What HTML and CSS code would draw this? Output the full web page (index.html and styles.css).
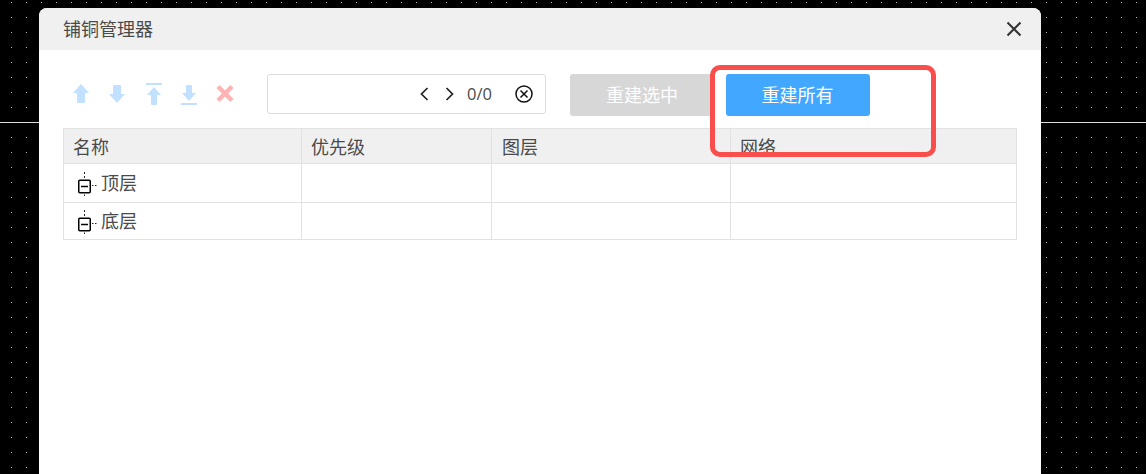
FILE: index.html
```html
<!DOCTYPE html>
<html lang="zh">
<head>
<meta charset="utf-8">
<title>铺铜管理器</title>
<link rel="stylesheet" href="styles.css">
</head>
<body>
<div class="dialog">
  <header class="dialog-head">
    <span class="dialog-title">铺铜管理器</span>
    <svg class="close" width="16" height="16" viewBox="0 0 16 16"><path d="M1.500 1.500l13 13M14.500 1.500l-13 13" stroke="#333" stroke-width="2" fill="none"/></svg>
  </header>
  <div class="dialog-body">
    <div class="toolbar">
      <div class="tools">
        <svg class="tool" width="20" height="22" viewBox="0 0 20 22"><path d="M10 1L18 10H14V19a1 1 0 0 1-1 1H7a1 1 0 0 1-1-1V10H2Z" fill="#c2e0ff"/></svg>
        <svg class="tool" width="20" height="22" viewBox="0 0 20 22"><path d="M7 2h6a1 1 0 0 1 1 1v8h4l-8 9-8-9h4V3a1 1 0 0 1 1-1Z" fill="#c2e0ff"/></svg>
        <svg class="tool" width="20" height="22" viewBox="0 0 20 22"><path d="M3 0h16v2H3ZM11 4l7 8h-4v9a1 1 0 0 1-1 1H9a1 1 0 0 1-1-1v-9H4Z" fill="#c2e0ff"/></svg>
        <svg class="tool" width="20" height="22" viewBox="0 0 20 22"><path d="M8 2h4a1 1 0 0 1 1 1v7h4l-7 8-7-8h4V3a1 1 0 0 1 1-1ZM2 20h16v2H2Z" fill="#c2e0ff"/></svg>
        <svg class="tool" width="20" height="22" viewBox="0 0 20 22"><path d="M3 3.500l14 14M17 3.500l-14 14" stroke="#ffb3b3" stroke-width="4.500" fill="none"/></svg>
      </div>
      <div class="search">
        <svg width="9" height="14" viewBox="0 0 9 14"><path d="M7.500 1L1.500 7l6 6" stroke="#222" stroke-width="1.700" fill="none"/></svg>
        <svg class="next" width="9" height="14" viewBox="0 0 9 14"><path d="M1.500 1l6 6-6 6" stroke="#222" stroke-width="1.700" fill="none"/></svg>
        <span class="count">0/0</span>
        <svg class="clear" width="18" height="18" viewBox="0 0 18 18"><circle cx="9" cy="9" r="8" stroke="#111" stroke-width="1.500" fill="none"/><path d="M5.500 5.500l7 7M12.500 5.500l-7 7" stroke="#111" stroke-width="1.500" fill="none"/></svg>
      </div>
      <button class="btn btn-off" type="button">重建选中</button>
      <button class="btn btn-on" type="button">重建所有</button>
    </div>
    <div class="table">
      <div class="row row-head">
        <div class="cell">名称</div><div class="cell">优先级</div><div class="cell">图层</div><div class="cell">网络</div>
      </div>
      <div class="row">
        <div class="cell cell-tree"><svg width="21" height="26" viewBox="0 0 21 26"><path d="M8.500 2v2M8.500 6v2M8.500 24.500v1.500M16 15.500h1.500M19 15.500h1.500" stroke="#222" fill="none"/><rect x="2.750" y="10.250" width="11.500" height="12.500" rx="1" stroke="#000" stroke-width="1.500" fill="#fff"/><path d="M5 16.500h7" stroke="#000" stroke-width="1.500"/></svg><span class="tree-label">顶层</span></div><div class="cell"></div><div class="cell"></div><div class="cell"></div>
      </div>
      <div class="row row-last">
        <div class="cell cell-tree"><svg width="21" height="26" viewBox="0 0 21 26"><path d="M8.500 2v2M8.500 6v2M8.500 24.500v1.500M16 15.500h1.500M19 15.500h1.500" stroke="#222" fill="none"/><rect x="2.750" y="10.250" width="11.500" height="12.500" rx="1" stroke="#000" stroke-width="1.500" fill="#fff"/><path d="M5 16.500h7" stroke="#000" stroke-width="1.500"/></svg><span class="tree-label">底层</span></div><div class="cell"></div><div class="cell"></div><div class="cell"></div>
      </div>
    </div>
  </div>
</div>
<div class="callout"></div>
</body>
</html>
```

FILE: styles.css
```css
html, body {
  margin: 0;
  height: 100%;
  overflow: hidden;
}
body {
  padding: 8px 0 0 39px;
  box-sizing: border-box;
  font-family: "Noto Sans CJK SC", "Noto Sans", sans-serif;
  color: #4a4a4a;
  background-color: #000;
  background-image:
    linear-gradient(#ddd, #ddd),
    radial-gradient(circle at 11.5px 2.5px, #bbb 0, #bbb .6px, transparent .9px);
  background-size: 100% 1px, 15px 15px;
  background-position: 0 122px, 0 0;
  background-repeat: no-repeat, repeat;
}
.dialog {
  width: 1002px;
  height: 466px;
  background: #fff;
  border-radius: 8px 8px 0 0;
}
.dialog-head {
  height: 42px;
  background: #f0f0f0;
  border-radius: 8px 8px 0 0;
  display: flex;
  align-items: center;
  justify-content: space-between;
  padding: 0 19px 0 24px;
}
.dialog-title {
  font-size: 18px;
  line-height: 40px;
  height: 42px;
}
.dialog-body {
  padding: 24px 24px 0;
}
.toolbar {
  display: flex;
  align-items: center;
  height: 42px;
}
.tools {
  display: flex;
  gap: 16px;
  width: 204px;
  padding: 0 0 2px 8px;
  box-sizing: border-box;
}
.search {
  width: 279px;
  height: 40px;
  margin-bottom: 2px;
  box-sizing: border-box;
  border: 1px solid #ddd;
  border-radius: 3px;
  display: flex;
  align-items: center;
  padding-left: 152px;
  font-size: 16.5px;
}
.next {
  margin-left: 16px;
}
.count {
  margin: 0 0 2px 13px;
  font-family: "Open Sans", "Noto Sans", sans-serif;
  width: 26px;
}
.clear {
  margin-left: 22px;
}
.btn {
  height: 42px;
  width: 144px;
  border: 0;
  border-radius: 3px;
  color: #fff;
  font: inherit;
  font-size: 18px;
  line-height: 40px;
  padding: 0 0 2px;
}
.btn-off {
  margin-left: 24px;
  background: #d7d7d7;
}
.btn-on {
  margin-left: 12px;
  background: #42a8ff;
  padding-right: 1px;
}
.table {
  margin-top: 12px;
  width: 954px;
  border: 1px solid #e2e2e2;
  border-bottom: 0;
  box-sizing: border-box;
}
.row {
  display: grid;
  grid-template-columns: 237px 190px 239px 1fr;
  height: 39px;
  border-bottom: 1px solid #e2e2e2;
  box-sizing: border-box;
}
.row-head {
  height: 35px;
  background: #f0f0f0;
}
.row-last {
  height: 37px;
}
.cell {
  border-left: 1px solid #e2e2e2;
  padding-left: 9px;
  font-size: 18px;
  display: flex;
  align-items: center;
}
.cell:first-child {
  border-left: 0;
}
.cell:nth-child(3) {
  padding-left: 10px;
}
.cell-tree {
  padding-left: 12px;
  gap: 4px;
}
.tree-label {
  margin-bottom: 2px;
}
.callout {
  position: absolute;
  left: 710px;
  top: 65px;
  width: 226px;
  height: 92px;
  box-sizing: border-box;
  border: 5px solid #f94e4b;
  border-radius: 10px;
}
```
